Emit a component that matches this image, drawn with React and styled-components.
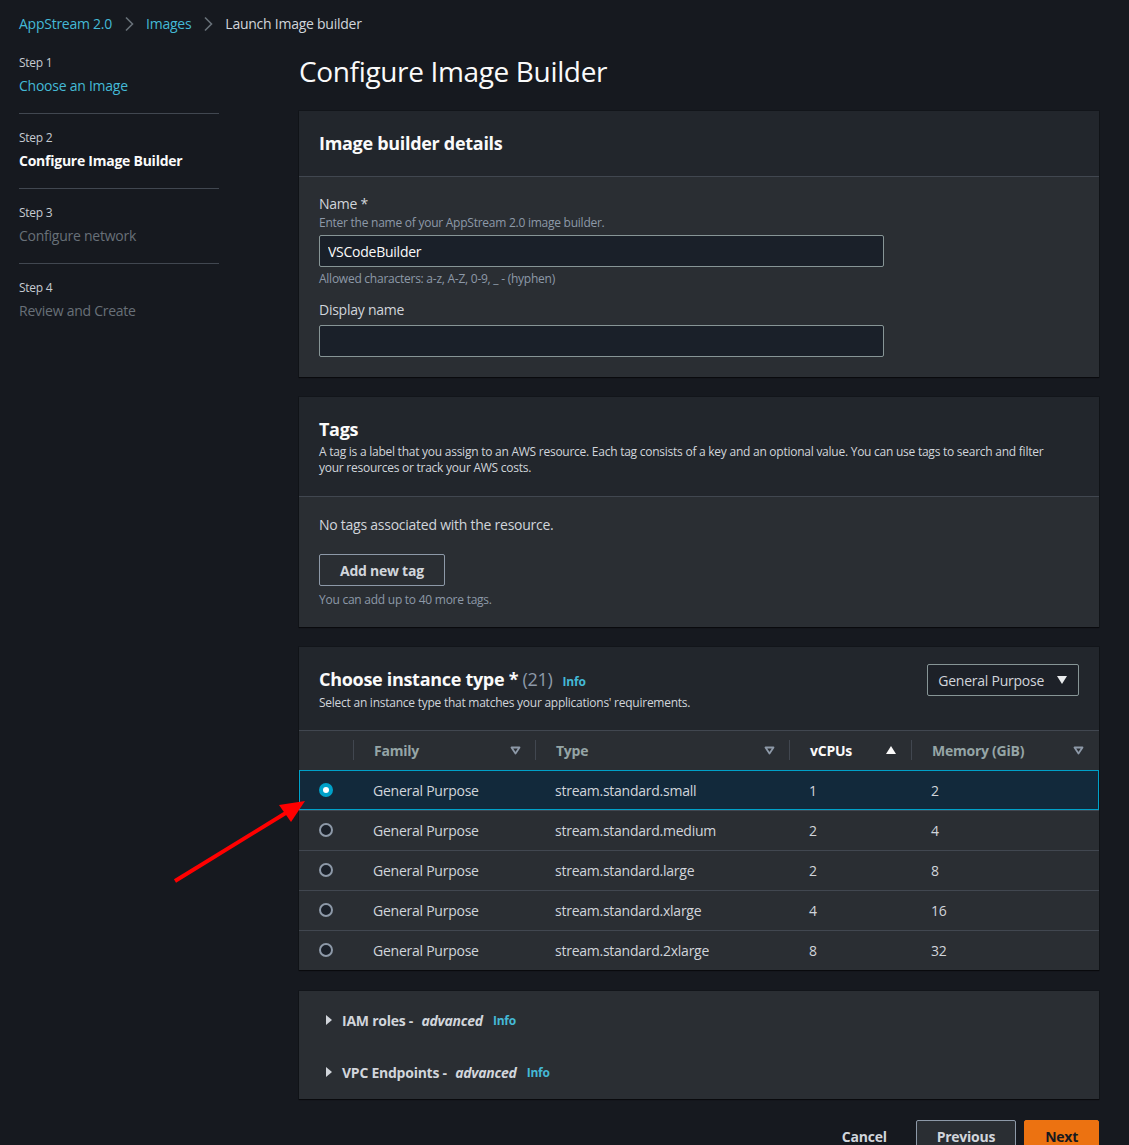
import styled, { createGlobalStyle } from "styled-components";

const GlobalStyle = createGlobalStyle`
  html, body {
    margin: 0;
    padding: 0;
    background: #16191f;
  }
  body {
    font-family: "Open Sans", "Noto Sans", sans-serif;
    color: #d1d5db;
    font-size: 14px;
    letter-spacing: -0.25px;
  }
  * { box-sizing: border-box; }
  button, input { letter-spacing: inherit; }
`;

const steps = [
  { label: "Step 1", title: "Choose an Image", state: "done" },
  { label: "Step 2", title: "Configure Image Builder", state: "active" },
  { label: "Step 3", title: "Configure network", state: "todo" },
  { label: "Step 4", title: "Review and Create", state: "todo" },
];

const rows = [
  { type: "stream.standard.small", cpu: 1, mem: 2 },
  { type: "stream.standard.medium", cpu: 2, mem: 4 },
  { type: "stream.standard.large", cpu: 2, mem: 8 },
  { type: "stream.standard.xlarge", cpu: 4, mem: 16 },
  { type: "stream.standard.2xlarge", cpu: 8, mem: 32 },
];

function SortDown() {
  return (
    <svg width="11" height="9" viewBox="0 0 11 9">
      <path d="M1.5 1.5 H9.5 L5.5 7.5 Z" fill="none" stroke="#8d99a8" strokeWidth="1.8" strokeLinejoin="round" />
    </svg>
  );
}

function SortUp() {
  return (
    <svg width="12" height="10" viewBox="0 0 12 10">
      <path d="M6 1 L11 9 H1 Z" fill="#fafafa" />
    </svg>
  );
}

function Caret() {
  return (
    <svg width="12" height="10" viewBox="0 0 12 10">
      <path d="M1 1 H11 L6 9 Z" fill="#e9ebed" />
    </svg>
  );
}

function ExpandIcon() {
  return (
    <svg width="8" height="12" viewBox="0 0 8 12">
      <path d="M1 1 L7 6 L1 11 Z" fill="#d1d5db" />
    </svg>
  );
}

function BreadcrumbChevron() {
  return (
    <Chevron>
      <svg width="10" height="16" viewBox="0 0 10 16">
        <path d="M2 1.5 L8.5 8 L2 14.5" fill="none" stroke="#687078" strokeWidth="1.6" />
      </svg>
    </Chevron>
  );
}

export default function App() {
  return (
    <Page>
      <GlobalStyle />
      <Breadcrumbs>
        <Crumb href="#">AppStream 2.0</Crumb>
        <BreadcrumbChevron />
        <Crumb href="#">Images</Crumb>
        <BreadcrumbChevron />
        <Current>Launch Image builder</Current>
      </Breadcrumbs>

      <Layout>
        <Sidebar>
          {steps.map((s, i) => (
            <Step key={s.label} $last={i === steps.length - 1}>
              <StepLabel>{s.label}</StepLabel>
              <StepTitle $state={s.state}>{s.title}</StepTitle>
            </Step>
          ))}
        </Sidebar>

        <Main>
          <PageTitle>Configure Image Builder</PageTitle>

          <Container>
            <ContainerHeader $pb={22}>
              <HeaderTitle>Image builder details</HeaderTitle>
            </ContainerHeader>
            <ContainerBody $pt={17} $pb={20}>
              <Label>Name *</Label>
              <Hint>Enter the name of your AppStream 2.0 image builder.</Hint>
              <Input defaultValue="VSCodeBuilder" />
              <Constraint>Allowed characters: a-z, A-Z, 0-9, _ - (hyphen)</Constraint>
              <Label $spaced>Display name</Label>
              <Input $gap />
            </ContainerBody>
          </Container>

          <Container>
            <ContainerHeader $pb={20}>
              <HeaderTitle>Tags</HeaderTitle>
              <HeaderDesc>
                A tag is a label that you assign to an AWS resource. Each tag consists of a key and an optional value. You can use tags to search and filter your resources or track your AWS costs.
              </HeaderDesc>
            </ContainerHeader>
            <ContainerBody $pt={18} $pb={19}>
              <Plain>No tags associated with the resource.</Plain>
              <OutlineButton>Add new tag</OutlineButton>
              <Constraint $gap={6}>You can add up to 40 more tags.</Constraint>
            </ContainerBody>
          </Container>

          <Container $mb={21}>
            <ContainerHeader $pb={19}>
              <HeaderRow>
                <div>
                  <HeaderTitle>
                    Choose instance type *<Count> (21)</Count>
                    <Info>Info</Info>
                  </HeaderTitle>
                  <HeaderDesc $gap={2}>Select an instance type that matches your applications' requirements.</HeaderDesc>
                </div>
                <Select>
                  General Purpose
                  <Caret />
                </Select>
              </HeaderRow>
            </ContainerHeader>
            <Table>
              <thead>
                <tr>
                  <Th $w={54} />
                  <Th $w={182}>
                    <ThInner>
                      <span>Family</span>
                      <SortDown />
                    </ThInner>
                  </Th>
                  <Th $w={254}>
                    <ThInner>
                      <span>Type</span>
                      <SortDown />
                    </ThInner>
                  </Th>
                  <Th $w={122} $sorted>
                    <ThInner>
                      <span>vCPUs</span>
                      <SortUp />
                    </ThInner>
                  </Th>
                  <Th>
                    <ThInner $lastCol>
                      <span>Memory (GiB)</span>
                      <SortDown />
                    </ThInner>
                  </Th>
                </tr>
              </thead>
              <tbody>
                {rows.map((r, i) => (
                  <Tr key={r.type} $selected={i === 0}>
                    <Td>
                      <Radio $checked={i === 0} />
                    </Td>
                    <Td>General Purpose</Td>
                    <Td>{r.type}</Td>
                    <Td>{r.cpu}</Td>
                    <Td>{r.mem}</Td>
                  </Tr>
                ))}
              </tbody>
            </Table>
          </Container>

          <Container>
            <ExpandList>
              <ExpandRow>
                <ExpandIcon />
                <ExpandText>
                  IAM roles - <em>advanced</em>
                </ExpandText>
                <Info>Info</Info>
              </ExpandRow>
              <ExpandRow>
                <ExpandIcon />
                <ExpandText>
                  VPC Endpoints - <em>advanced</em>
                </ExpandText>
                <Info>Info</Info>
              </ExpandRow>
            </ExpandList>
          </Container>

          <Actions>
            <LinkButton>Cancel</LinkButton>
            <SecondaryButton>Previous</SecondaryButton>
            <PrimaryButton>Next</PrimaryButton>
          </Actions>
        </Main>
      </Layout>

      <Arrow width="140" height="90" viewBox="0 0 140 90">
        <line x1="4" y1="86" x2="118" y2="16" stroke="#f00" strokeWidth="4" />
        <path d="M134 6 L108 10 L120 27 Z" fill="#f00" />
      </Arrow>
    </Page>
  );
}

const Page = styled.div`
  position: relative;
  padding: 14px 30px 0 19px;
  min-height: 1145px;
`;

const Breadcrumbs = styled.nav`
  display: flex;
  align-items: center;
  height: 20px;
  line-height: 20px;
  font-size: 14px;
`;

const Crumb = styled.a`
  color: #44b9d6;
  text-decoration: none;
`;

const Chevron = styled.span`
  display: flex;
  margin: 0 12px;
`;

const Current = styled.span`
  color: #d1d5db;
`;

const Layout = styled.div`
  display: grid;
  grid-template-columns: 200px 800px;
  column-gap: 80px;
  margin-top: 20px;
`;

const Sidebar = styled.ol`
  list-style: none;
  margin: 0;
  padding: 0;
`;

const Step = styled.li`
  padding-top: 1px;
  padding-bottom: 17px;
  margin-bottom: 15px;
  border-bottom: ${(p) => (p.$last ? "none" : "1px solid #414750")};
`;

const StepLabel = styled.div`
  font-size: 12px;
  line-height: 16px;
  color: #c6cbd1;
`;

const StepTitle = styled.div`
  margin-top: 5px;
  font-size: 14px;
  line-height: 20px;
  font-weight: ${(p) => (p.$state === "active" ? 700 : 400)};
  color: ${(p) =>
    p.$state === "done" ? "#44b9d6" : p.$state === "active" ? "#fafafa" : "#687078"};
`;

const Main = styled.main`
  display: flex;
  flex-direction: column;
`;

const PageTitle = styled.h1`
  margin: -1px 0 22px;
  font-size: 28px;
  line-height: 36px;
  font-weight: 400;
  letter-spacing: -0.35px;
  color: #fafafa;
`;

const Container = styled.section`
  background: #2a2e33;
  box-shadow: 0 1px 1px 0 rgba(0, 0, 0, 0.5), 0 0 0 1px rgba(0, 0, 0, 0.15);
  margin-bottom: ${(p) => p.$mb || 20}px;
`;

const ContainerHeader = styled.header`
  background: #22262c;
  padding: 21px 20px ${(p) => p.$pb}px;
  border-bottom: 1px solid #414750;
`;

const HeaderRow = styled.div`
  display: flex;
  justify-content: space-between;
  align-items: flex-start;
`;

const HeaderTitle = styled.h2`
  margin: 0;
  font-size: 18px;
  line-height: 22px;
  font-weight: 700;
  letter-spacing: -0.3px;
  color: #fafafa;
`;

const Count = styled.span`
  font-weight: 400;
  color: #8d99a8;
`;

const Info = styled.a`
  margin-left: 10px;
  font-size: 12px;
  font-weight: 700;
  letter-spacing: -0.2px;
  color: #44b9d6;
  text-decoration: none;
`;

const HeaderDesc = styled.p`
  margin: ${(p) => (p.$gap !== undefined ? p.$gap : 4)}px 0 0;
  font-size: 12px;
  line-height: 16px;
  color: #d1d5db;
  max-width: 745px;
`;

const ContainerBody = styled.div`
  padding: ${(p) => p.$pt}px 20px ${(p) => p.$pb}px;
`;

const Label = styled.div`
  margin-top: ${(p) => (p.$spaced ? "13px" : "0")};
  font-size: 14px;
  line-height: 20px;
  color: #d1d5db;
`;

const Hint = styled.div`
  font-size: 12px;
  line-height: 17px;
  color: #8d99a8;
`;

const Input = styled.input`
  display: block;
  width: 565px;
  height: 32px;
  margin-top: ${(p) => (p.$gap ? "5px" : "4px")};
  padding: 0 8px;
  background: #1a2029;
  border: 1px solid #879596;
  border-radius: 2px;
  color: #fafafa;
  font-family: inherit;
  font-size: 14px;
  outline: none;
`;

const Constraint = styled.div`
  margin-top: ${(p) => p.$gap || 4}px;
  font-size: 12px;
  line-height: 16px;
  color: #8d99a8;
`;

const Plain = styled.p`
  margin: 0;
  font-size: 14px;
  line-height: 20px;
  color: #d1d5db;
`;

const OutlineButton = styled.button`
  display: block;
  margin-top: 19px;
  height: 32px;
  padding: 0 20px;
  background: transparent;
  border: 1px solid #8d99a8;
  border-radius: 2px;
  color: #d1d5db;
  font-family: inherit;
  font-size: 14px;
  font-weight: 700;
`;

const Select = styled.button`
  display: flex;
  align-items: center;
  gap: 12px;
  height: 32px;
  margin-top: -4px;
  padding: 0 10px;
  background: #1d2128;
  border: 1px solid #879596;
  border-radius: 2px;
  color: #d1d5db;
  font-family: inherit;
  font-size: 14px;
`;

const Table = styled.table`
  width: 100%;
  border-collapse: collapse;
  table-layout: fixed;
`;

const Th = styled.th`
  width: ${(p) => (p.$w ? `${p.$w}px` : "auto")};
  height: 39px;
  padding: 0;
  font-size: 14px;
  font-weight: 700;
  text-align: left;
  color: ${(p) => (p.$sorted ? "#fafafa" : "#95a5a6")};
`;

const ThInner = styled.div`
  display: flex;
  align-items: center;
  justify-content: space-between;
  height: 20px;
  padding: 0 ${(p) => (p.$lastCol ? "15px" : "14px")} 0 20px;
  border-left: 1px solid #414750;
`;

const Tr = styled.tr`
  height: 40px;
  background: ${(p) => (p.$selected ? "#12293b" : "transparent")};
  outline: ${(p) => (p.$selected ? "1px solid #00a1c9" : "none")};
  outline-offset: -1px;
  border-top: 1px solid #414750;
`;

const Td = styled.td`
  padding: 0 20px;
  font-size: 14px;
  color: #d1d5db;
  &:first-child {
    padding: 0 0 0 20px;
  }
`;

const Radio = styled.span`
  display: block;
  position: relative;
  width: 14px;
  height: 14px;
  border-radius: 50%;
  background: ${(p) => (p.$checked ? "#00a1c9" : "#1a2029")};
  border: ${(p) => (p.$checked ? "4px solid #00a1c9" : "2px solid #8d99a8")};
  &::after {
    content: "";
    display: ${(p) => (p.$checked ? "block" : "none")};
    position: absolute;
    inset: 0;
    border-radius: 50%;
    background: #fff;
  }
`;

const ExpandList = styled.div`
  padding: 3px 20px 1px 26px;
`;

const ExpandRow = styled.div`
  display: flex;
  align-items: center;
  height: 52px;
`;

const ExpandText = styled.span`
  margin-left: 9px;
  font-size: 14px;
  font-weight: 700;
  color: #d1d5db;
  em {
    margin-left: 5px;
    font-style: italic;
  }
`;

const Actions = styled.div`
  display: flex;
  justify-content: flex-end;
  gap: 8px;
  margin-top: 1px;
`;

const BaseButton = styled.button`
  height: 32px;
  padding: 0 20px;
  border-radius: 2px;
  font-family: inherit;
  font-size: 14px;
  font-weight: 700;
`;

const LinkButton = styled(BaseButton)`
  background: transparent;
  border: 1px solid transparent;
  color: #d1d5db;
`;

const SecondaryButton = styled(BaseButton)`
  background: #2a2e33;
  border: 1px solid #8d99a8;
  color: #d1d5db;
`;

const PrimaryButton = styled(BaseButton)`
  background: #ec7211;
  border: 1px solid #ec7211;
  color: #16191f;
`;

const Arrow = styled.svg`
  position: absolute;
  left: 171px;
  top: 795px;
  pointer-events: none;
`;
